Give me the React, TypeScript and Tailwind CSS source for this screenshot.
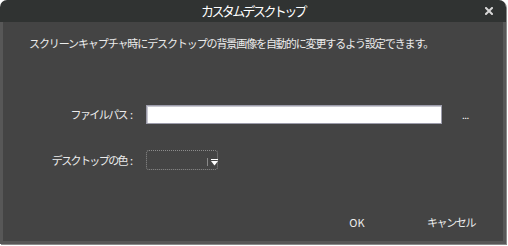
import React from "react";

const jp = { fontFamily: '"Noto Sans CJK JP", "Noto Sans", sans-serif' };

export default function App() {
  return (
    <div className="w-[508px] h-[246px] bg-white relative" style={jp}>
      <div className="w-[506px] h-[244px] flex flex-col rounded-t-[7px] shadow-[1px_1px_0_#8a8a8a] overflow-hidden">
        {/* title bar */}
        <div className="h-[22px] bg-[#303332] flex items-center relative shrink-0">
          <div className="flex-1 text-center text-white text-[13px] leading-[22px] tracking-[-2.6px]">
            カスタムデスクトップ
          </div>
          <div className="absolute right-[13px] top-[7px] w-[8px] h-[8px]">
            <svg width="8" height="8" viewBox="0 0 8 8">
              <path d="M1 1 L7 7 M7 1 L1 7" stroke="#d8d8d8" strokeWidth="2" strokeLinecap="square" />
            </svg>
          </div>
        </div>
        {/* body */}
        <div className="flex-1 bg-[#444444] border-x-[3px] border-b-[3px] border-[#575757] flex flex-col text-[#ececec]">
          <div className="pl-[26px] mt-[13px] h-[16px] text-[11px] leading-[16px] tracking-[-1.1px] whitespace-nowrap">
            スクリーンキャプチャ時にデスクトップの背景画像を自動的に変更するよう設定できます。
          </div>
          <div className="flex items-center mt-[54px] h-[19px]">
            <div className="w-[130px] flex justify-end items-center text-[11px] leading-[19px] whitespace-nowrap">
              <span className="tracking-[-1.6px]">ファイルパス</span>
              <span className="ml-[3px]">:</span>
            </div>
            <div className="ml-[13px] w-[296px] h-[19px] bg-white border border-[#9c9cab] shadow-[inset_1px_1px_0_#c8c8d0]" />
            <div className="ml-[20px] text-[10px] leading-[19px] tracking-[-0.5px] text-white">...</div>
          </div>
          <div className="flex items-center mt-[26px] h-[20px]">
            <div className="w-[130px] flex justify-end items-center text-[11px] leading-[20px] whitespace-nowrap">
              <span className="tracking-[-1.6px]">デスクトップの色</span>
              <span className="ml-[3px]">:</span>
            </div>
            <div className="ml-[13px] w-[72px] h-[20px] border border-dotted border-[#8c8c8c] rounded-[3px] relative">
              <div className="absolute left-[60px] top-[7px] w-px h-[8px] bg-[#8a8a8a]" />
              <svg className="absolute left-[64px] top-[8px]" width="7" height="7" viewBox="0 0 7 7">
                <rect x="0" y="0" width="7" height="1" fill="#ffffff" />
                <path d="M0 2 L7 2 L3.5 6.5 Z" fill="#ffffff" />
              </svg>
            </div>
          </div>
          <div className="flex items-center mt-[44px] h-[16px] text-[11px] leading-[16px]">
            <div className="ml-[345px] w-[18px] text-center">OK</div>
            <div className="ml-[61px] tracking-[-1.4px] whitespace-nowrap">キャンセル</div>
          </div>
        </div>
      </div>
    </div>
  );
}
